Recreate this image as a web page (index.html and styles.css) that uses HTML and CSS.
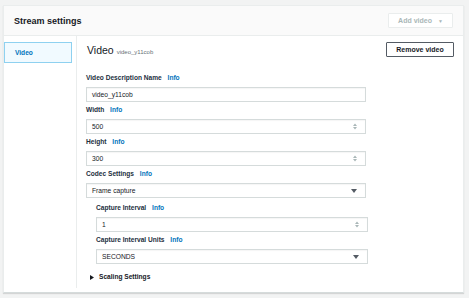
FILE: index.html
```html
<!DOCTYPE html>
<html>
<head>
<meta charset="utf-8">
<link rel="stylesheet" href="styles.css">
</head>
<body>
<div class="card">
  <div class="card-header">
    <div class="title">Stream settings</div>
    <div class="btn btn-disabled">Add video <span class="caret-small">&#9660;</span></div>
  </div>
  <div class="card-body">
    <div class="nav">
      <div class="tab">Video</div>
    </div>
    <div class="content">
      <div class="content-head">
        <div class="heading">Video <span class="sub">video_y11cob</span></div>
        <div class="btn btn-normal">Remove video</div>
      </div>
      <div class="form">
        <div class="field">
          <div class="label">Video Description Name <span class="info">Info</span></div>
          <div class="input">video_y11cob</div>
        </div>
        <div class="field">
          <div class="label">Width <span class="info">Info</span></div>
          <div class="input">500<svg class="spin" width="4" height="7" viewBox="0 0 4 7"><path d="M0 3L2 0.5L4 3Z M0 4L2 6.5L4 4Z" fill="#aab7b8"/></svg></div>
        </div>
        <div class="field">
          <div class="label">Height <span class="info">Info</span></div>
          <div class="input">300<svg class="spin" width="4" height="7" viewBox="0 0 4 7"><path d="M0 3L2 0.5L4 3Z M0 4L2 6.5L4 4Z" fill="#aab7b8"/></svg></div>
        </div>
        <div class="field">
          <div class="label">Codec Settings <span class="info">Info</span></div>
          <div class="input">Frame capture<svg class="caret" width="6" height="4" viewBox="0 0 6 4"><path d="M0 0H6L3 4Z" fill="#545b64"/></svg></div>
        </div>
        <div class="nested">
          <div class="field">
            <div class="label">Capture Interval <span class="info">Info</span></div>
            <div class="input">1<svg class="spin" width="4" height="7" viewBox="0 0 4 7"><path d="M0 3L2 0.5L4 3Z M0 4L2 6.5L4 4Z" fill="#aab7b8"/></svg></div>
          </div>
          <div class="field">
            <div class="label">Capture Interval Units <span class="info">Info</span></div>
            <div class="input">SECONDS<svg class="caret" width="6" height="4" viewBox="0 0 6 4"><path d="M0 0H6L3 4Z" fill="#545b64"/></svg></div>
          </div>
        </div>
        <div class="expander"><svg class="tri" width="4" height="5" viewBox="0 0 4 5"><path d="M0 0L4 2.5L0 5Z" fill="#16191f"/></svg>Scaling Settings</div>
      </div>
    </div>
  </div>
</div>
</body>
</html>
```
FILE: styles.css
```css
* { box-sizing: border-box; }
html, body { margin: 0; padding: 0; }
body {
  background: #f2f3f3;
  font-family: "Liberation Sans", Arial, sans-serif;
  color: #16191f;
  width: 469px;
  height: 298px;
  overflow: hidden;
}
.card {
  margin: 5px 0 0 3px;
  width: 461px;
  height: 288px;
  background: #fff;
  border: 1px solid #eaeded;
  border-bottom-color: #d5dbdb;
  box-shadow: 0 1px 1px rgba(0,0,0,0.12);
  display: flex;
  flex-direction: column;
}
.card-header {
  height: 30px;
  background: #fafafa;
  border-bottom: 1px solid #eaeded;
  display: flex;
  align-items: center;
  justify-content: space-between;
  padding: 0 10px 0 10px;
  flex-shrink: 0;
}
.title {
  font-weight: bold;
  font-size: 9px;
  padding-top: 1px;
}
.btn {
  height: 15px;
  display: flex;
  align-items: center;
  justify-content: center;
  font-size: 7px;
  font-weight: bold;
  border: 1px solid;
  border-radius: 1px;
}
.btn-disabled {
  width: 65px;
  border-color: #eaeded;
  color: #aab7b8;
  background: #fff;
}
.caret-small { font-size: 5px; margin-left: 6px; }
.btn-normal {
  width: 68px;
  border-color: #545b64;
  color: #16191f;
  background: #fff;
}
.card-body {
  flex: 1;
  display: flex;
  padding-bottom: 4px;
}
.nav {
  width: 73px;
  border-right: 1px solid #eaeded;
  padding-top: 6px;
}
.tab {
  width: 68px;
  height: 21px;
  border: 1px solid #8ed1f0;
  background: #f1faff;
  color: #0073bb;
  font-size: 6.6px;
  font-weight: bold;
  display: flex;
  align-items: center;
  padding-left: 10px;
}
.content {
  flex: 1;
  padding: 6px 9px 0 9px;
}
.content-head {
  display: flex;
  justify-content: space-between;
  align-items: center;
  height: 15px;
}
.heading {
  font-size: 10.5px;
  padding-left: 1px;
  display: flex;
  align-items: baseline;
}
.sub {
  font-size: 6px;
  color: #687078;
  margin-left: 3px;
}
.form {
  width: 280px;
  padding-top: 16px;
}
.field { margin-bottom: 3px; }
.label {
  height: 10px;
  line-height: 10px;
  font-size: 6.6px;
  font-weight: bold;
  color: #232f3e;
  margin-bottom: 4px;
  white-space: nowrap;
}
.info {
  color: #0073bb;
  margin-left: 4px;
}
.input {
  height: 15px;
  border: 1px solid #d5dbdb;
  box-shadow: inset 0 1px 1px rgba(0,0,0,0.04);
  background: #fff;
  font-size: 6.7px;
  display: flex;
  align-items: center;
  justify-content: space-between;
  padding: 0 7px 0 5px;
}
.spin { display: block; margin-right: 1px; }
.caret { display: block; margin-right: 1px; }
.nested {
  padding-left: 10px;
  margin-right: -2px;
  padding-top: 2px;
}
.expander {
  margin-top: 8px;
  height: 10px;
  line-height: 10px;
  font-size: 6.6px;
  font-weight: bold;
  display: flex;
  align-items: center;
  padding-left: 4px;
}
.tri { display: block; margin-right: 5px; }
```
